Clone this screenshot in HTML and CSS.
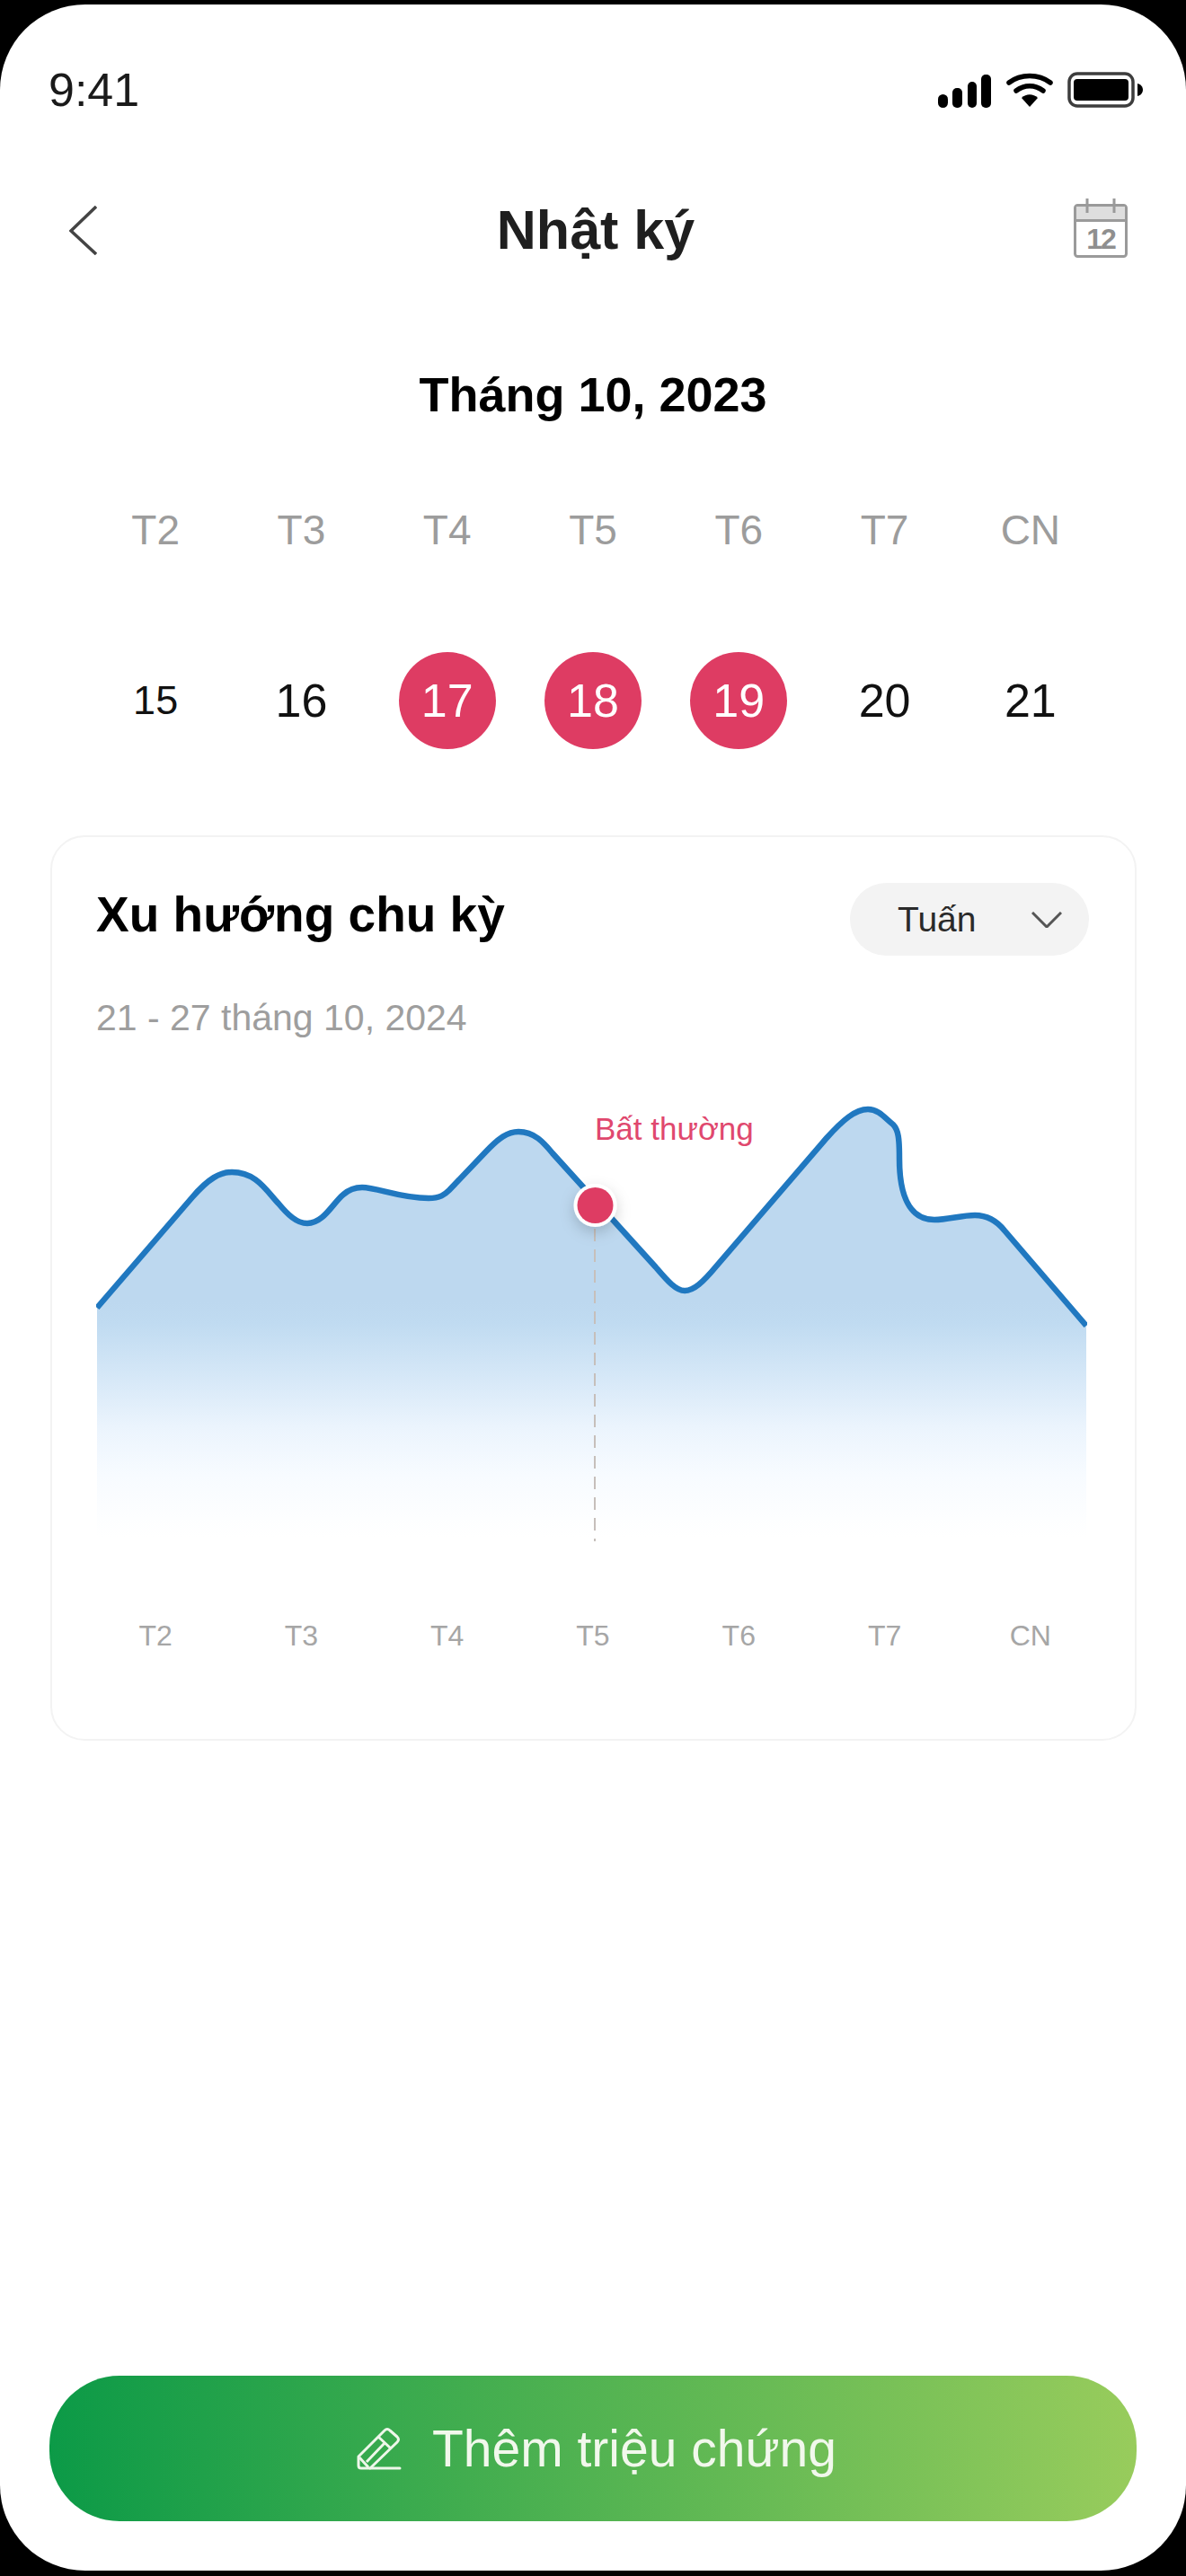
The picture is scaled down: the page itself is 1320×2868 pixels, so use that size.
FILE: index.html
```html
<!DOCTYPE html>
<html lang="vi">
<head>
    <meta charset="UTF-8">
    <meta name="viewport" content="width=device-width, initial-scale=1.0">
    <title>Nhật ký</title>
    <link rel="stylesheet" href="styles.css">
</head>
<body>
    <div class="screen">
        <div class="status-bar">
            <span class="time">9:41</span>
            <div class="status-icons">
                <svg class="icon-signal" width="59" height="37" viewBox="0 0 59 37">
                    <rect x="0" y="22" width="11" height="15" rx="5.500"/>
                    <rect x="16" y="15" width="11" height="22" rx="5"/>
                    <rect x="33" y="8" width="10" height="29" rx="5"/>
                    <rect x="48" y="0" width="11" height="37" rx="5"/>
                </svg>
                <svg class="icon-wifi" width="52" height="38" viewBox="0 0 52 38">
                    <path d="M3 11C16 1 36 1 49 11" fill="none" stroke="#000" stroke-width="5.500" stroke-linecap="round"/>
                    <path d="M11 20C20 13 32 13 41 20" fill="none" stroke="#000" stroke-width="5.500" stroke-linecap="round"/>
                    <path d="M17 28C22 23 30 23 35 28L26 38Z"/>
                </svg>
                <svg class="icon-battery" width="84" height="40" viewBox="0 0 84 40">
                    <rect x="2" y="2" width="71" height="36" rx="9" fill="none" stroke="#3d3d3d" stroke-width="3.500"/>
                    <rect x="7" y="8" width="61" height="24" rx="4"/>
                    <path d="M78 13C82 14 84 17 84 20C84 23 82 26 78 27Z"/>
                </svg>
            </div>
        </div>

        <div class="nav">
            <svg class="icon-back" width="31" height="55" viewBox="0 0 31 55">
                <path d="M30 1L2 28L30 54" fill="none" stroke="#444" stroke-width="3.500"/>
            </svg>
            <h1 class="nav-title">Nhật ký</h1>
            <svg class="icon-calendar" width="60" height="66" viewBox="0 0 60 66">
                <rect x="1.500" y="7.500" width="57" height="57" rx="3" fill="#fff" stroke="#9a9a9a" stroke-width="3"/>
                <rect x="3" y="9" width="54" height="15" fill="#dedede"/>
                <path d="M2 24.500H58M15 0V16M45 0V16" fill="none" stroke="#9a9a9a" stroke-width="3"/>
                <text class="calendar-day" x="30" y="56" text-anchor="middle">12</text>
            </svg>
        </div>

        <div class="month">Tháng 10, 2023</div>

        <div class="week weekdays">
            <span>T2</span><span>T3</span><span>T4</span><span>T5</span><span>T6</span><span>T7</span><span>CN</span>
        </div>

        <div class="week dates">
            <span class="date date-small">15</span>
            <span class="date">16</span>
            <span class="date date-on">17</span>
            <span class="date date-on">18</span>
            <span class="date date-on">19</span>
            <span class="date">20</span>
            <span class="date">21</span>
        </div>

        <div class="card">
            <div class="card-head">
                <h2 class="card-title">Xu hướng chu kỳ</h2>
                <div class="select">
                    <span>Tuấn</span>
                    <svg width="34" height="18" viewBox="0 0 34 18">
                        <path d="M1 1L17 17L33 1" fill="none" stroke="#555" stroke-width="3"/>
                    </svg>
                </div>
            </div>
            <p class="card-range">21 - 27 tháng 10, 2024</p>

            <div class="chart">
                <svg width="1103" height="530" viewBox="107 1200 1103 530">
                    <defs>
                        <linearGradient id="area" gradientUnits="userSpaceOnUse" x1="0" y1="1450" x2="0" y2="1712">
                            <stop offset="0" stop-color="#bdd8ef"/>
                            <stop offset="0.09" stop-color="#c0dbf1"/>
                            <stop offset="0.34" stop-color="#d8e9f8"/>
                            <stop offset="0.53" stop-color="#ebf4fd"/>
                            <stop offset="0.73" stop-color="#f7fbff"/>
                            <stop offset="0.92" stop-color="#fdfeff"/>
                            <stop offset="1" stop-color="#ffffff"/>
                        </linearGradient>
                        <filter id="dot-shadow" x="-100%" y="-100%" width="300%" height="300%">
                            <feDropShadow dx="0" dy="6" stdDeviation="8" flood-color="#000" flood-opacity="0.18"/>
                        </filter>
                    </defs>
                    <path fill="url(#area)" d="M108 1456L214 1333C232 1312 245 1305 258 1305C285 1305 296 1325 310 1340C320 1352 330 1362 342 1362C360 1362 370 1340 382 1330C390 1323 397 1322 403 1322C420 1322 445 1334 477 1334C490 1334 495 1330 500 1325L540 1283C555 1267 565 1260 577 1260C595 1260 605 1272 615 1284L730 1411C742 1425 752 1437 762 1437C772 1437 782 1428 797 1410L920 1267C938 1247 952 1235 966 1235C978 1235 985 1245 994 1252C1000 1258 1001 1268 1001 1290C1001 1330 1012 1358 1040 1358C1055 1358 1070 1353 1085 1353C1100 1353 1110 1360 1118 1370L1209 1476V1716H108Z"/>
                    <path fill="none" stroke="#2078c0" stroke-width="6.500" d="M108 1456L214 1333C232 1312 245 1305 258 1305C285 1305 296 1325 310 1340C320 1352 330 1362 342 1362C360 1362 370 1340 382 1330C390 1323 397 1322 403 1322C420 1322 445 1334 477 1334C490 1334 495 1330 500 1325L540 1283C555 1267 565 1260 577 1260C595 1260 605 1272 615 1284L730 1411C742 1425 752 1437 762 1437C772 1437 782 1428 797 1410L920 1267C938 1247 952 1235 966 1235C978 1235 985 1245 994 1252C1000 1258 1001 1268 1001 1290C1001 1330 1012 1358 1040 1358C1055 1358 1070 1353 1085 1353C1100 1353 1110 1360 1118 1370L1209 1476"/>
                    <path d="M662 1368V1716" fill="none" stroke="#c6bfbb" stroke-width="2" stroke-dasharray="14 9"/>
                    <circle cx="662.500" cy="1342" r="24" fill="#fff" filter="url(#dot-shadow)"/>
                    <circle cx="662.500" cy="1342" r="20" fill="#de3c63"/>
                </svg>
                <span class="chart-label">Bất thường</span>
            </div>

            <div class="week axis">
                <span>T2</span><span>T3</span><span>T4</span><span>T5</span><span>T6</span><span>T7</span><span>CN</span>
            </div>
        </div>

        <button class="add-btn">
            <svg width="50" height="50" viewBox="0 0 50 50">
                <path d="M31 5Q34 2 37 5L45 12Q48 15 45 18L15 47H5Q2 47 2 44V34Z" fill="none" stroke="#eef7ea" stroke-width="3" stroke-linejoin="round"/>
                <path d="M24 12L38 25M31 19L11 40M3 35L13 46" fill="none" stroke="#eef7ea" stroke-width="3"/>
                <path d="M15 47H48" fill="none" stroke="#eef7ea" stroke-width="3" stroke-linecap="round"/>
            </svg>
            <span>Thêm triệu chứng</span>
        </button>
    </div>
</body>
</html>
```

FILE: styles.css
```css
html, body {
    margin: 0;
    height: 2868px;
    overflow: hidden;
}
body {
    background: #000;
    font-family: "Liberation Sans", Arial, sans-serif;
    color: #000;
}
.screen {
    box-sizing: border-box;
    height: 2857px;
    margin-top: 5px;
    border-radius: 95px;
    background: #fff;
    display: flex;
    flex-direction: column;
}

/* status bar */
.status-bar {
    height: 190px;
    padding: 0 48px 0 54px;
    display: flex;
    align-items: center;
    justify-content: space-between;
}
.time {
    font-size: 52px;
    color: #1a1a1a;
}
.status-icons {
    display: flex;
    align-items: center;
    gap: 17px;
}
.icon-signal {
    margin-top: 2px;
}
.icon-battery {
    margin-left: -1px;
}

/* nav */
.nav {
    height: 122px;
    padding: 0 62px 0 68px;
    display: grid;
    grid-template-columns: 1fr auto 1fr;
    align-items: center;
}
.icon-back {
    margin-left: 9px;
}
.nav-title {
    margin: 0;
    font-size: 61px;
    font-weight: 700;
    color: #1f1f1f;
}
.icon-calendar {
    justify-self: end;
    margin-top: -4px;
    margin-right: 3px;
}
.calendar-day {
    font-size: 32px;
    font-weight: 700;
    letter-spacing: -2px;
    fill: #8f8f8f;
}

/* week */
.month {
    margin-top: 91px;
    font-size: 54px;
    line-height: 62px;
    font-weight: 700;
    text-align: center;
}
.week {
    display: grid;
    grid-template-columns: repeat(7, 1fr);
    justify-items: center;
    align-items: center;
    text-align: center;
}
.weekdays {
    margin: 95px 92px 0;
    font-size: 46px;
    line-height: 50px;
    color: #9c9c9c;
}
.dates {
    margin: 110px 92px 0;
    height: 110px;
}
.date {
    width: 108px;
    height: 108px;
    line-height: 108px;
    font-size: 52px;
    color: #111;
}
.date-small {
    font-size: 45px;
}
.date-on {
    border-radius: 50%;
    background: #de3c63;
    color: #fff;
}

/* card */
.card {
    box-sizing: border-box;
    height: 1008px;
    margin: 95px 55px 0 56px;
    border: 2px solid #f3f3f3;
    border-radius: 38px;
}
.card-head {
    margin: 51px 51px 0 49px;
    display: flex;
    justify-content: space-between;
    align-items: flex-start;
}
.card-title {
    margin: 0;
    font-size: 55px;
    line-height: 70px;
    font-weight: 700;
}
.select {
    box-sizing: border-box;
    width: 266px;
    height: 81px;
    padding: 0 30px 0 53px;
    border-radius: 41px;
    background: #f3f3f3;
    display: flex;
    align-items: center;
    justify-content: space-between;
    font-size: 39px;
    color: #2a2a2a;
}
.card-range {
    margin: 44px 0 0 49px;
    font-size: 41px;
    line-height: 50px;
    color: #9e9e9e;
}
.chart {
    position: relative;
    margin: 42px 52px 0 49px;
    height: 530px;
}
.chart svg {
    display: block;
}
.chart-label {
    position: absolute;
    left: 555px;
    top: 36px;
    font-size: 35px;
    line-height: 42px;
    color: #e0486e;
}
.axis {
    margin: 71px 35px 0 34px;
    font-size: 32px;
    line-height: 40px;
    color: #a6a6a6;
}

/* button */
.add-btn {
    margin: auto 55px 55px;
    padding: 0 0 0 8px;
    height: 162px;
    border: none;
    border-radius: 78px;
    background: linear-gradient(90deg, #0c9a47 0%, #98cc5c 100%);
    color: #f1f8ec;
    font-family: inherit;
    font-size: 57px;
    display: flex;
    align-items: center;
    justify-content: center;
    gap: 34px;
    cursor: pointer;
}
```
